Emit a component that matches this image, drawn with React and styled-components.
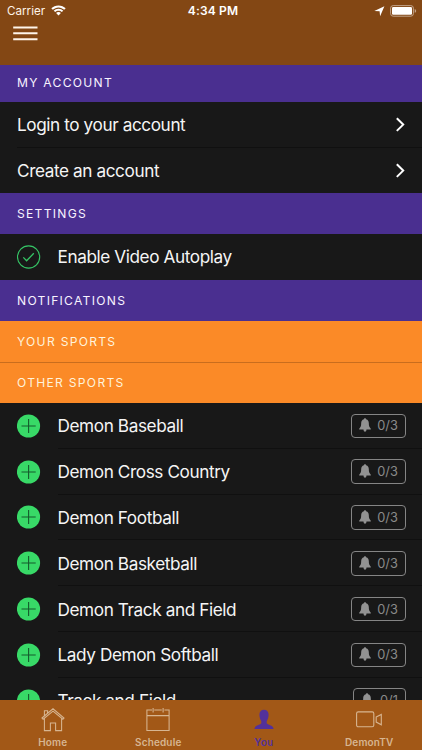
import React from "react";
import styled, { createGlobalStyle, css } from "styled-components";

const GlobalStyle = createGlobalStyle`
  * { box-sizing: border-box; }
  body { margin: 0; background: #181818; }
`;

const Screen = styled.div`
  width: 422px;
  height: 750px;
  display: flex;
  flex-direction: column;
  overflow: hidden;
  background: #181818;
  color: #fff;
  font-family: Inter, "Liberation Sans", sans-serif;
`;

const Header = styled.header`
  flex: none;
  height: 65.3px;
  background: #834714;
`;

const StatusBar = styled.div`
  height: 22px;
  display: grid;
  grid-template-columns: 1fr auto 1fr;
  align-items: center;
  padding: 0 5px 0 7px;
  line-height: 22px;
`;

const Carrier = styled.div`
  display: flex;
  align-items: center;
  gap: 6px;
  font-size: 11.6px;
  letter-spacing: 0.02px;
  color: #fff4e8;
  svg { display: block; margin-top: -1px; }
`;

const Clock = styled.div`
  padding-left: 2px;
  font-size: 12px;
  font-weight: 600;
  letter-spacing: 0.15px;
`;

const StatusIcons = styled.div`
  display: flex;
  justify-content: flex-end;
  align-items: center;
  gap: 5px;
  svg { display: block; }
`;

const MenuButton = styled.button`
  display: block;
  margin: 4px 0 0 13px;
  padding: 0;
  border: 0;
  background: none;
  svg { display: block; }
`;

const Content = styled.main`
  flex: 1;
  min-height: 0;
  overflow: hidden;
`;

const SectionTitle = styled.h2`
  margin: 0;
  height: ${(p) => p.$height || 41}px;
  display: flex;
  align-items: center;
  padding: 0 17px ${(p) => p.$lift || 0}px;
  font-size: 12.1px;
  font-weight: 400;
  letter-spacing: 1.28px;
  color: ${(p) => (p.$orange ? "#fff3dc" : "#f8f3ff")};
  background: ${(p) => (p.$orange ? "#fb8a27" : "#4a2f90")};
  ${(p) => p.$divided && css`border-top: 1px solid #c96d1d;`}
`;

const Row = styled.div`
  height: ${(p) => p.$height || 45.8}px;
  display: flex;
  align-items: center;
  padding: 0 17px;
`;

const RowBody = styled.div`
  flex: 1;
  height: 100%;
  display: flex;
  align-items: center;
  justify-content: space-between;
  margin-right: -17px;
  padding-right: ${(p) => p.$inset || 16.5}px;
  border-bottom: ${(p) => (p.$last ? 0 : 1)}px solid #101010;
  svg { display: block; }
`;

const Label = styled.span`
  padding-top: ${(p) => p.$drop || 0}px;
  font-size: 17.2px;
  line-height: 22px;
  letter-spacing: -0.41px;
  white-space: nowrap;
  color: #f5f5f5;
`;

const IconSlot = styled.div`
  flex: none;
  width: 40.5px;
  svg { display: block; }
`;

const AlertCount = styled.button`
  width: ${(p) => p.$width || 54.5}px;
  height: 24.6px;
  display: flex;
  align-items: center;
  justify-content: space-between;
  margin-top: 1px;
  padding: 0 6.5px 0 7px;
  border: 1px solid #858585;
  border-radius: 4px;
  background: transparent;
  color: #8a8a8a;
  font: 400 12.8px Inter, "Liberation Sans", sans-serif;
  letter-spacing: 0.05px;
  svg { margin-top: -1px; }
`;

const TabBar = styled.nav`
  flex: none;
  height: 50.5px;
  display: grid;
  grid-template-columns: repeat(4, 1fr);
  background: #a25817;
`;

const Tab = styled.a`
  display: flex;
  flex-direction: column;
  align-items: center;
  color: ${(p) => (p.$active ? "#52319b" : "#d7b591")};
  font-size: 10px;
  font-weight: 600;
  line-height: 12px;
  letter-spacing: 0.15px;
  svg { display: block; margin: 8px 0 4px; }
`;

const WifiIcon = () => (
  <svg width="15" height="11" viewBox="0 0 15 11" fill="#fff">
    <path d="M7.5 0.4C10.4 .4 12.9 1.6 14.7 3.3L13.2 4.8C11.6 3.3 9.7 2.4 7.5 2.4S3.4 3.3 1.8 4.8L.3 3.3C2.1 1.6 4.6.4 7.5.4Z" />
    <path d="M7.5 3.7C9.4 3.7 11.1 4.4 12.3 5.7L10.8 7.1C9.9 6.2 8.8 5.7 7.5 5.7S5.1 6.2 4.2 7.1L2.7 5.7C3.9 4.4 5.6 3.7 7.5 3.7Z" />
    <path d="M7.5 6.9C8.5 6.9 9.3 7.3 9.9 8L7.5 10.5 5.1 8C5.7 7.3 6.5 6.9 7.5 6.9Z" />
  </svg>
);

const LocationIcon = () => (
  <svg width="11" height="11" viewBox="0 0 11 11" fill="#fff">
    <path d="M10.4.3 6.1 10.2 5.6 5.2.3 4.9Z" />
  </svg>
);

const BatteryIcon = () => (
  <svg width="27" height="12" viewBox="0 0 27 12">
    <rect x=".6" y=".6" width="22.8" height="10.6" rx="2.6" fill="none" stroke="#c3a48a" />
    <rect x="2" y="2" width="20" height="7.8" rx="1.2" fill="#fff" />
    <path d="M24.7 4.1Q26.2 4.6 26.2 5.9T24.7 7.8Z" fill="#c3a48a" />
  </svg>
);

const MenuIcon = () => (
  <svg width="25" height="15" viewBox="0 0 25 15" stroke="#fff5ea" strokeWidth="2">
    <path d="M.2 1.4H24.5M.2 7.3H24.5M.2 13.2H24.5" />
  </svg>
);

const ChevronIcon = () => (
  <svg width="10" height="16" viewBox="0 0 10 16" fill="none" stroke="#fff" strokeWidth="2">
    <path d="M1.8 2.3 8.2 8.6 1.8 14.9" />
  </svg>
);

const CheckIcon = () => (
  <svg width="24" height="24" viewBox="0 0 24 24" fill="none" stroke="#35c465">
    <circle cx="11.6" cy="12" r="11.1" strokeWidth="1.1" />
    <path d="M6.3 12.4 9.6 15.8 16.8 8.3" strokeWidth="1.3" />
  </svg>
);

const PlusIcon = () => (
  <svg width="24" height="24" viewBox="0 0 24 24">
    <circle cx="11.5" cy="12" r="11.6" fill="#38d967" />
    <path d="M4.5 12H18.7M11.6 4.9V19.1" stroke="#145a2c" strokeWidth="1.1" />
  </svg>
);

const BellIcon = () => (
  <svg width="12" height="14" viewBox="0 0 12 14" fill="#929292">
    <path d="M6 .2C6.7.2 7.1.6 7.1 1.3 9 1.8 9.8 3.3 9.8 5.1 9.8 8.2 10.4 9.2 11.8 10.7V11.6H.2V10.7C1.6 9.2 2.2 8.2 2.2 5.1 2.2 3.3 3 1.8 4.9 1.3 4.9.6 5.3.2 6 .2ZM4.5 11.6H7.5C7.4 13.2 6.8 13.7 6 13.7S4.6 13.2 4.5 11.6Z" />
  </svg>
);

const HomeIcon = () => (
  <svg width="24" height="24" viewBox="0 0 24 24" fill="none" stroke="currentColor" strokeWidth="1.05">
    <path d="M1 10 12 .8 23 10 21.9 11.2 12 3.1 2.1 11.2ZM3.4 10.4V22.6H9.4V14.9H14.6V22.6H20.6V10.4M3.4 7.7V2.7H6.6V5" />
  </svg>
);

const CalendarIcon = () => (
  <svg width="24" height="24" viewBox="0 0 24 24" fill="none" stroke="currentColor" strokeWidth="1.05">
    <path d="M6 1.9H.9V22.4H23.1V1.9H18.4M8.2 1.9H15.8M.9 7.6H23.1M7.1.1V4.5M17.1.1V4.5" />
  </svg>
);

const PersonIcon = () => (
  <svg width="24" height="24" viewBox="0 0 24 24" fill="currentColor">
    <path d="M12 1.7C15 1.7 16.7 3.7 16.6 6.8 16.6 9.3 15.8 11.4 14.7 13V15.3C15.3 17.2 21.2 16.7 21.6 21.1H2.4C2.8 16.7 8.7 17.2 9.3 15.3V13C8.2 11.4 7.4 9.3 7.4 6.8 7.3 3.7 9 1.7 12 1.7Z" />
  </svg>
);

const VideoIcon = () => (
  <svg width="26" height="24" viewBox="0 0 26 24" fill="none" stroke="currentColor" strokeWidth="1.1">
    <rect x=".6" y="3.9" width="17.2" height="14.9" rx="1.6" />
    <path d="M20.2 9.1 25.3 6.4V16.8L20.2 14.1Z" />
  </svg>
);

const sports = [
  { name: "Demon Baseball", alerts: "0/3" },
  { name: "Demon Cross Country", alerts: "0/3" },
  { name: "Demon Football", alerts: "0/3" },
  { name: "Demon Basketball", alerts: "0/3" },
  { name: "Demon Track and Field", alerts: "0/3" },
  { name: "Lady Demon Softball", alerts: "0/3" },
  { name: "Track and Field", alerts: "0/1", width: 52.5 },
];

const tabs = [
  { name: "Home", Icon: HomeIcon },
  { name: "Schedule", Icon: CalendarIcon },
  { name: "You", Icon: PersonIcon, active: true },
  { name: "DemonTV", Icon: VideoIcon },
];

export default function App() {
  return (
    <Screen>
      <GlobalStyle />
      <Header>
        <StatusBar>
          <Carrier>Carrier <WifiIcon /></Carrier>
          <Clock>4:34 PM</Clock>
          <StatusIcons><LocationIcon /><BatteryIcon /></StatusIcons>
        </StatusBar>
        <MenuButton aria-label="Menu"><MenuIcon /></MenuButton>
      </Header>
      <Content>
        <SectionTitle $height={36.7} $lift={2}>MY ACCOUNT</SectionTitle>
        <Row $height={46}>
          <RowBody $inset={17}><Label $drop={2}>Login to your account</Label><ChevronIcon /></RowBody>
        </Row>
        <Row $height={45}>
          <RowBody $inset={17} $last><Label $drop={1}>Create an account</Label><ChevronIcon /></RowBody>
        </Row>
        <SectionTitle>SETTINGS</SectionTitle>
        <Row $height={46}>
          <IconSlot><CheckIcon /></IconSlot>
          <RowBody $last><Label $drop={1}>Enable Video Autoplay</Label></RowBody>
        </Row>
        <SectionTitle>NOTIFICATIONS</SectionTitle>
        <SectionTitle $orange>YOUR SPORTS</SectionTitle>
        <SectionTitle $orange $divided $lift={1}>OTHER SPORTS</SectionTitle>
        {sports.map((sport) => (
          <Row key={sport.name}>
            <IconSlot><PlusIcon /></IconSlot>
            <RowBody>
              <Label $drop={2}>{sport.name}</Label>
              <AlertCount $width={sport.width}><BellIcon />{sport.alerts}</AlertCount>
            </RowBody>
          </Row>
        ))}
      </Content>
      <TabBar>
        {tabs.map(({ name, Icon, active }) => (
          <Tab key={name} $active={active}><Icon />{name}</Tab>
        ))}
      </TabBar>
    </Screen>
  );
}
